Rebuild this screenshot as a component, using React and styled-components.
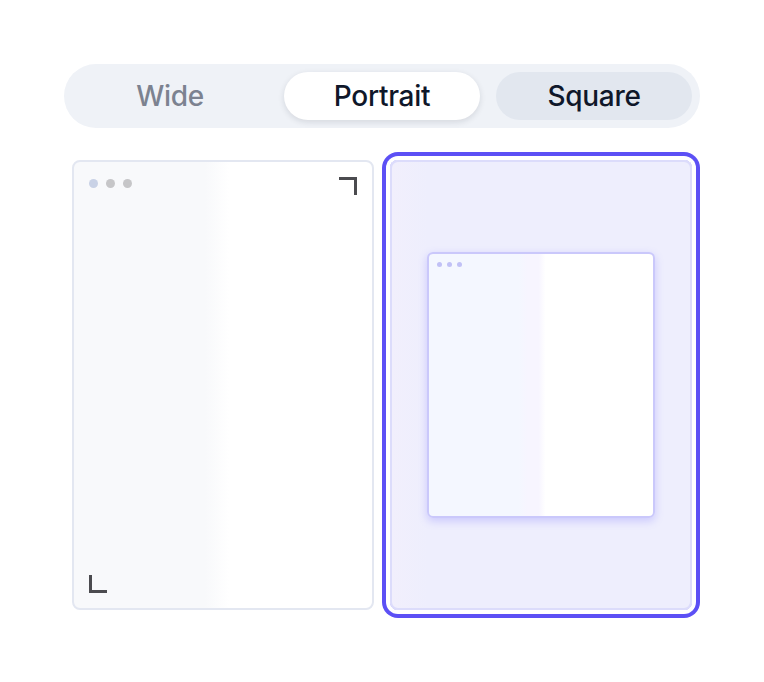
import React from 'react';
import styled, { createGlobalStyle } from 'styled-components';

const Global = createGlobalStyle`
  body {
    margin: 0;
    background: #ffffff;
    font-family: Inter, "Noto Sans", sans-serif;
  }
`;

const Page = styled.div`
  width: 636px;
  padding: 64px 64px 64px 64px;
  display: flex;
  flex-direction: column;
  gap: 32px;
`;

const Segmented = styled.div`
  display: grid;
  grid-template-columns: repeat(3, 1fr);
  gap: 16px;
  padding: 8px;
  height: 48px;
  border-radius: 32px;
  background: #eff2f7;
`;

const Segment = styled.button`
  border: 0;
  border-radius: 24px;
  font-family: inherit;
  font-size: 28px;
  font-weight: 500;
  letter-spacing: -0.3px;
  cursor: pointer;
  color: ${p => (p.muted ? '#7c8290' : '#0f172a')};
  background: ${p => (p.active ? '#ffffff' : p.hover ? '#e2e7ef' : 'transparent')};
  box-shadow: ${p => (p.active ? '0 2px 6px rgba(15, 23, 42, 0.12)' : 'none')};
`;

const Cards = styled.div`
  display: grid;
  grid-template-columns: 1fr 1fr;
  gap: 16px;
  padding: 0 8px;
`;

const Card = styled.div`
  position: relative;
  box-sizing: border-box;
  height: 450px;
  border-radius: 8px;
  border: 2px solid ${p => (p.selected ? '#dcdcfb' : '#e3e7f1')};
  background: ${p =>
    p.selected
      ? 'linear-gradient(90deg, #f1effc 0%, #eeeefd 12%, #eeeefd 100%)'
      : 'linear-gradient(90deg, #f8f9fb 0%, #f8f9fb 44%, #ffffff 52%, #ffffff 100%)'};
  box-shadow: ${p => (p.selected ? '0 0 0 4px #ffffff, 0 0 0 8px #5c50f5' : 'none')};
  display: flex;
  align-items: center;
  justify-content: center;
`;

const Dots = styled.div`
  position: absolute;
  top: ${p => p.top}px;
  left: ${p => p.left}px;
  display: flex;
  gap: ${p => p.gap}px;
  filter: blur(0.7px);
`;

const Dot = styled.span`
  width: ${p => p.size}px;
  height: ${p => p.size}px;
  border-radius: 50%;
  background: ${p => p.color};
`;

const Corner = styled.svg`
  position: absolute;
  width: 20px;
  height: 20px;
  ${p => (p.top ? 'top: 14px; right: 14px;' : 'bottom: 14px; left: 14px;')}
`;

const Window = styled.div`
  position: relative;
  box-sizing: border-box;
  width: 228px;
  height: 266px;
  border-radius: 6px;
  border: 2px solid #cac8fb;
  background: linear-gradient(
    90deg,
    #f4f7ff 0%,
    #f4f7ff 40%,
    #f7f5ff 44%,
    #f7f5ff 49%,
    #ffffff 52%,
    #ffffff 100%
  );
  box-shadow: 0 3px 8px rgba(108, 99, 255, 0.28);
`;

function CornerMark({ top }) {
  return (
    <Corner top={top} viewBox="0 0 20 20">
      <path
        d={top ? 'M1 2.5 H17.5 V19' : 'M2.5 1 V17.5 H19'}
        fill="none"
        stroke="#4b4b4f"
        strokeWidth="3"
      />
    </Corner>
  );
}

export default function App() {
  return (
    <>
      <Global />
      <Page>
        <Segmented>
          <Segment muted>Wide</Segment>
          <Segment active>Portrait</Segment>
          <Segment hover>Square</Segment>
        </Segmented>
        <Cards>
          <Card>
            <Dots top={17} left={15} gap={8}>
              <Dot size={9} color="#c9d2e6" />
              <Dot size={9} color="#c6c6c8" />
              <Dot size={9} color="#c6c6c8" />
            </Dots>
            <CornerMark top />
            <CornerMark />
          </Card>
          <Card selected>
            <Window>
              <Dots top={8} left={8} gap={5}>
                <Dot size={5} color="#c1c1f6" />
                <Dot size={5} color="#c1c1f6" />
                <Dot size={5} color="#c1c1f6" />
              </Dots>
            </Window>
          </Card>
        </Cards>
      </Page>
    </>
  );
}
